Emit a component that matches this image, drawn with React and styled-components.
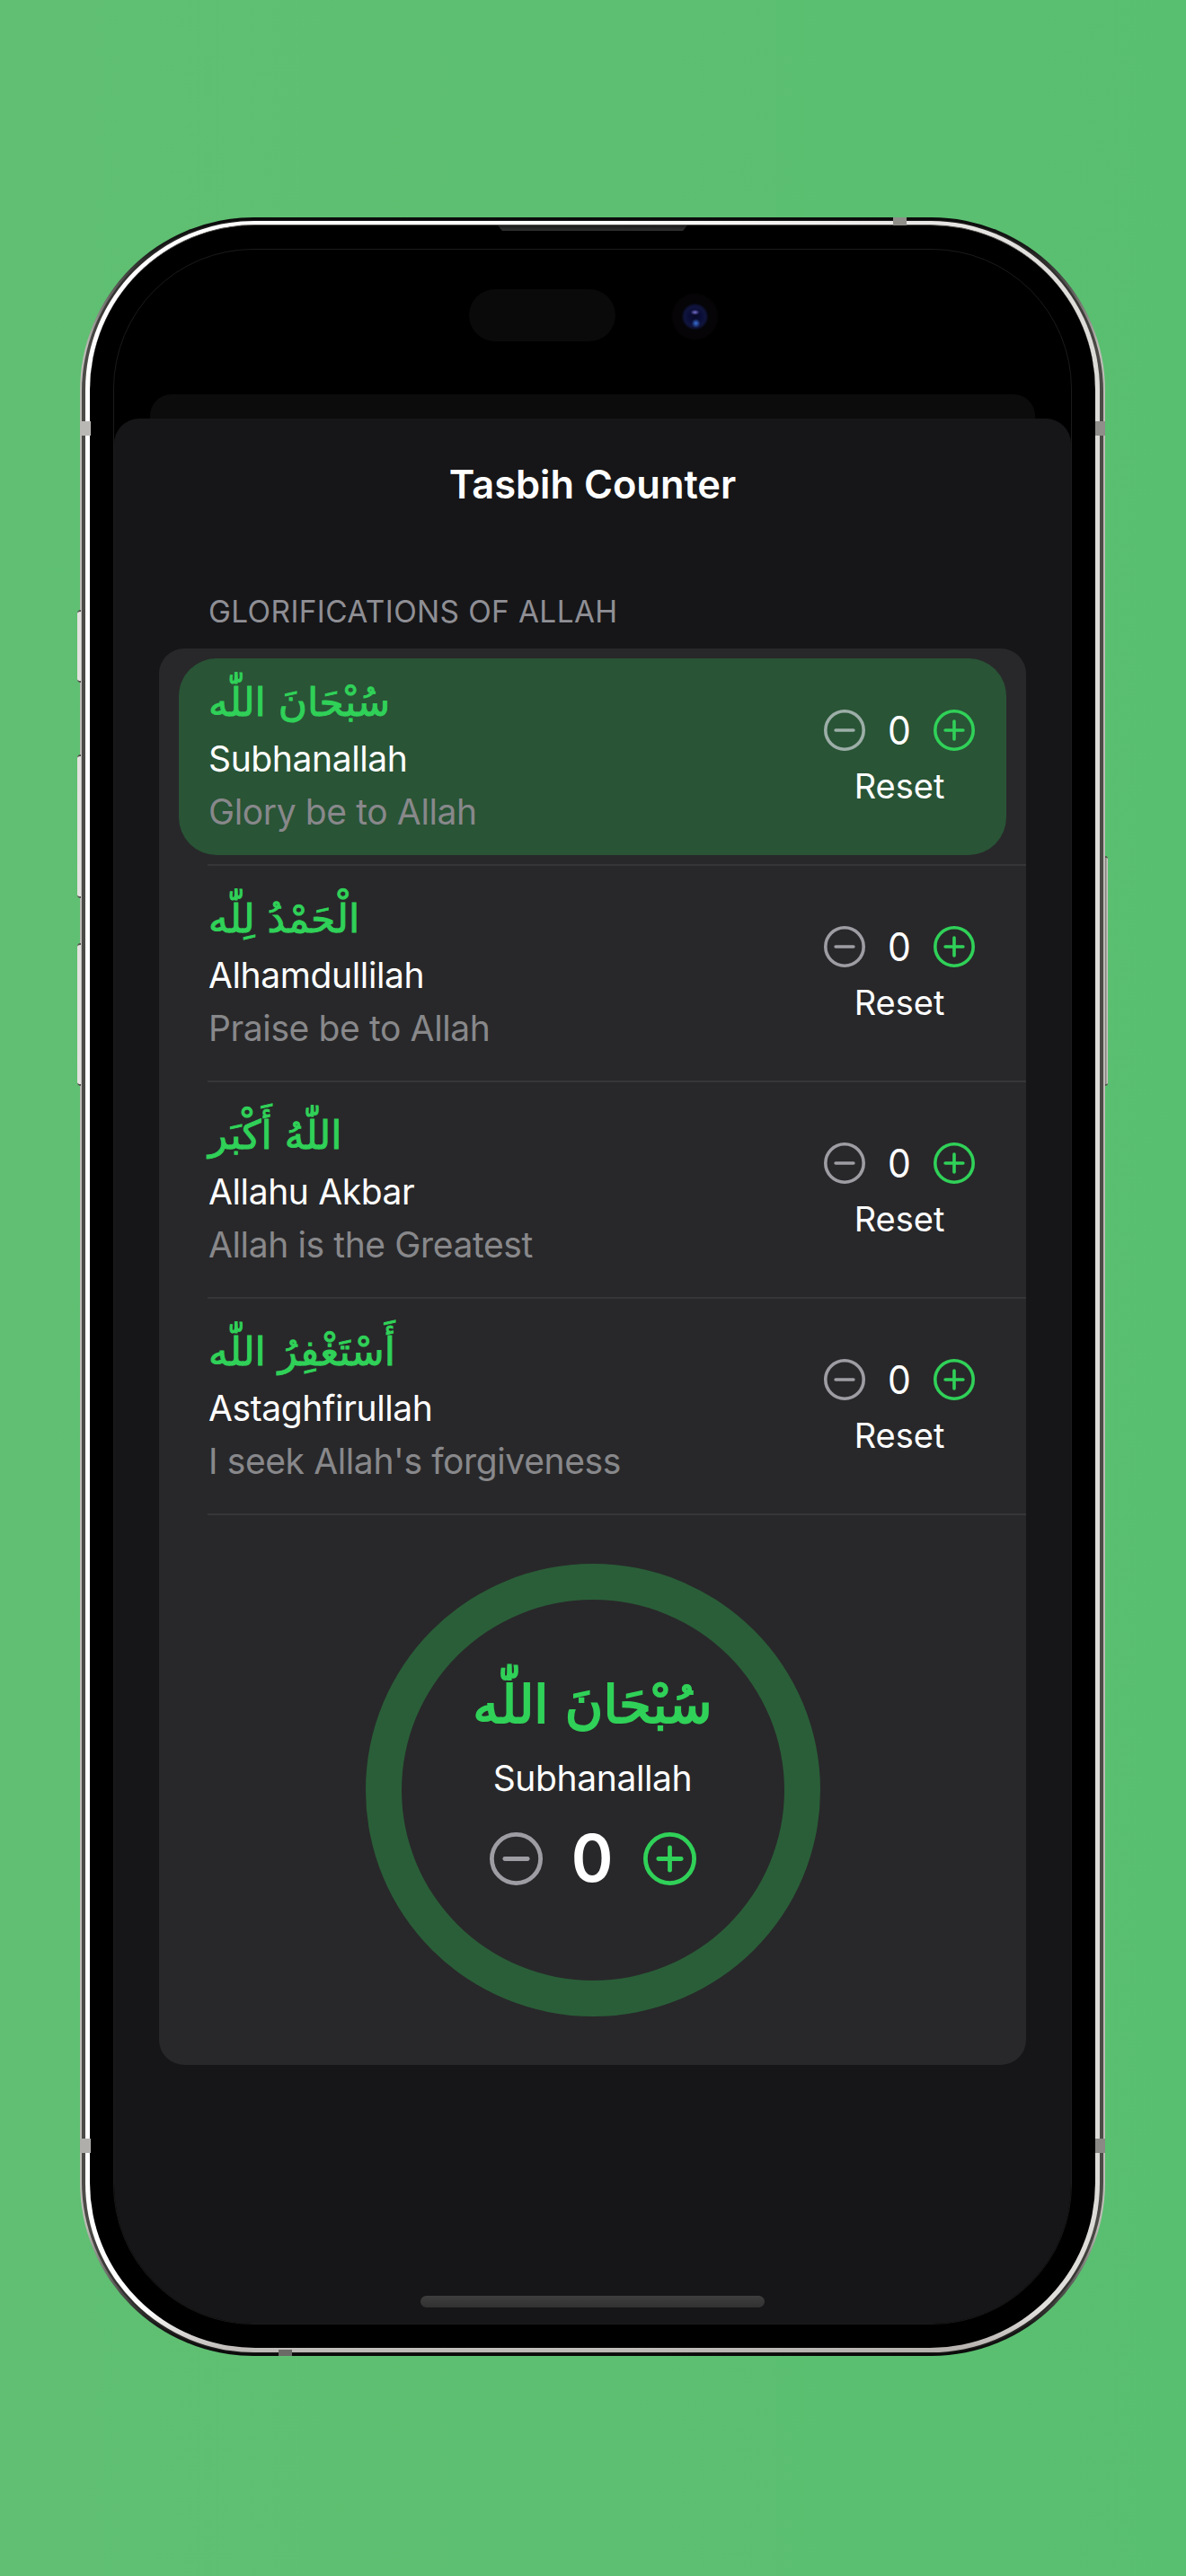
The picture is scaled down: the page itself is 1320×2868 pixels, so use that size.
import React from "react";
import styled, { createGlobalStyle, css } from "styled-components";

const GREEN = "#30d158";

const GlobalStyle = createGlobalStyle`
  *, *::before, *::after { box-sizing: border-box; }
  body { margin: 0; }
  button { margin: 0; padding: 0; border: 0; background: none; color: inherit; font: inherit; letter-spacing: inherit; }
`;

const Stage = styled.main`
  width: 1320px;
  height: 2868px;
  padding: 242px 90px 0 89px;
  background: linear-gradient(90deg, #60bf72, #59bf70);
  font-family: Inter, "Liberation Sans", sans-serif;
  color: #fff;
  overflow: hidden;
`;

const Phone = styled.div`
  position: relative;
  height: 2381px;
  padding: 3px 2px;
  border-radius: 193px;
  background: linear-gradient(#0a0a0a 0, #1a1a1a 1.5%, #bdbbb6 6%, #bdbbb6 94%, #1a1a1a 98.5%, #0a0a0a);
`;

const FrameGroove = styled.div`
  height: 100%;
  padding: 1px 4px;
  border-radius: 191px;
  background: linear-gradient(#1c1b1a, #4c4a47 6%, #4c4a47 94%, #1c1b1a);
`;

const FrameShine = styled.div`
  height: 100%;
  padding: 4px 5px 5px;
  border-radius: 188px;
  background:
    linear-gradient(transparent 98%, rgba(150, 144, 140, 0.65)),
    linear-gradient(90deg, #fff 0, #fff 50%, #dddbd8 100%);
`;

const Bezel = styled.div`
  height: 100%;
  padding: 26px;
  border-top: 1px solid #55534f;
  border-radius: 184px;
  background: #000;
`;

const Screen = styled.div`
  position: relative;
  display: flex;
  flex-direction: column;
  height: 100%;
  padding-top: 161px;
  border: 1px solid #1b1b1b;
  border-radius: 156px;
  background: #000;
  overflow: hidden;
`;

const BackSheet = styled.div`
  flex: none;
  height: 27px;
  margin: 0 40px;
  border-radius: 24px 24px 0 0;
  background: #0c0c0c;
`;

const Sheet = styled.section`
  flex: 1;
  display: flex;
  flex-direction: column;
  padding: 45px 50px 0;
  border-radius: 28px 28px 0 0;
  background: #161618;
`;

const Title = styled.h1`
  margin: 0;
  text-align: center;
  font-size: 43.4px;
  line-height: 56px;
  font-weight: 600;
`;

const SectionLabel = styled.h2`
  margin: 90px 0 0 55px;
  font-size: 33.4px;
  line-height: 48px;
  font-weight: 400;
  letter-spacing: 0.38px;
  color: #8f8f95;
`;

const Card = styled.div`
  height: 1577px;
  margin-top: 17px;
  border-radius: 28px;
  background: #28282a;
`;

const Row = styled.div`
  display: flex;
  align-items: stretch;
  height: 241px;
  padding: 11px 22px 0 22px;
`;

const RowBody = styled.div`
  flex: 1;
  display: flex;
  justify-content: space-between;
  height: 219px;
  padding: 0 35px 0 33px;
  border-radius: 42px;
  background: ${(p) => (p.$active ? "#295436" : "transparent")};
`;

const Divider = styled.hr`
  height: 2px;
  margin: -1px 0 -1px 54px;
  border: 0;
  background: #363638;
`;

const Phrase = styled.div`
  display: flex;
  flex-direction: column;
  align-items: flex-start;
  padding-top: 16px;
`;

const Arabic = styled.span`
  font-family: "DejaVu Sans", sans-serif;
  font-size: ${(p) => (p.$large ? 58 : 44)}px;
  line-height: ${(p) => (p.$large ? 86 : 66)}px;
  -webkit-text-stroke: ${(p) => (p.$large ? 2 : 1)}px ${GREEN};
  white-space: nowrap;
  color: ${GREEN};
`;

const Name = styled.span`
  font-size: 39px;
  line-height: 59px;
  letter-spacing: -0.38px;
  white-space: nowrap;
`;

const Meaning = styled(Name)`
  color: #88888b;
`;

const Controls = styled.div`
  display: flex;
  flex-direction: column;
  align-items: center;
  padding-top: 57px;
`;

const Stepper = styled.div`
  display: flex;
  align-items: center;
  justify-content: space-between;
  width: ${(p) => (p.$large ? 230 : 168)}px;
  height: ${(p) => (p.$large ? 60 : 46)}px;
`;

const Count = styled.span`
  font-size: ${(p) => (p.$large ? 73 : 44)}px;
  line-height: 46px;
  font-weight: ${(p) => (p.$large ? 600 : 400)};
  transform: scaleX(${(p) => (p.$large ? 0.97 : 0.93)});
`;

const IconButton = styled.button`
  display: flex;
  color: ${(p) => (p.$tone === "add" ? GREEN : "rgba(235, 235, 245, 0.6)")};
`;

const ResetButton = styled.button`
  margin-top: 14px;
  font-size: 38px;
  line-height: 50px;
`;

const RingArea = styled.div`
  display: flex;
  justify-content: center;
  padding-top: 55px;
`;

const Ring = styled.div`
  display: flex;
  flex-direction: column;
  align-items: center;
  width: 506px;
  height: 504px;
  padding-top: 74px;
  border: 40px solid #2a5e38;
  border-radius: 50%;
`;

const RingName = styled(Name)`
  margin: 9px 0 30px;
`;

const Overlay = styled.span`
  position: absolute;
  left: ${(p) => p.$x}px;
  top: ${(p) => p.$y}px;
  width: ${(p) => p.$w}px;
  height: ${(p) => p.$h}px;
`;

const Band = styled(Overlay)`
  background: ${(p) => p.$tint};
`;

const SideKey = styled(Overlay)`
  border: solid #55524e;
  border-width: 2px 0;
  background: #e4e2df;
  ${(p) =>
    p.$right
      ? css`border-radius: 0 4px 4px 0; background: linear-gradient(90deg, #77736e, #d8d6d2);`
      : css`border-radius: 4px 0 0 4px;`}
`;

const Earpiece = styled(Overlay)`
  background: linear-gradient(#1c1c1c, #303030);
  clip-path: polygon(0 0, 100% 0, calc(100% - 5px) 100%, 5px 100%);
`;

const SensorPill = styled(Overlay)`
  border-radius: 29px;
  background: #0a0a0a;
`;

const Camera = styled(Overlay)`
  border-radius: 50%;
  background:
    radial-gradient(ellipse 5px 3px at 50% 41%, #7a70d0 0, rgba(50, 44, 140, 0) 100%),
    radial-gradient(circle 5px at 52% 64%, #3a70d8 0, rgba(30, 60, 150, 0) 100%),
    radial-gradient(circle 26px at 50% 50%, #080a26 0, #0a0e38 28%, #10153e 44%, #0b0d26 52%, #050407 58%, #060406 92%, #020202 100%);
`;

const HomeIndicator = styled(Overlay)`
  border-radius: 7px;
  background: linear-gradient(#3e3e3f, #313132);
`;

function CircleIcon({ size, stroke, plus }) {
  const c = size / 2;
  const arm = size * 0.215;
  return (
    <svg width={size} height={size} fill="none" stroke="currentColor" strokeWidth={stroke} strokeLinecap="round">
      <circle cx={c} cy={c} r={c - stroke / 2} />
      <path d={`M${c - arm} ${c}H${c + arm}`} />
      {plus && <path d={`M${c} ${c - arm}V${c + arm}`} />}
    </svg>
  );
}

function Counter({ value, large }) {
  const icon = large ? { size: 59, stroke: 4.8 } : { size: 46, stroke: 3.6 };
  return (
    <Stepper $large={large}>
      <IconButton aria-label="Decrease" $tone="remove"><CircleIcon {...icon} /></IconButton>
      <Count $large={large}>{value}</Count>
      <IconButton aria-label="Increase" $tone="add"><CircleIcon {...icon} plus /></IconButton>
    </Stepper>
  );
}

const PHRASES = [
  { arabic: "سُبْحَانَ اللّٰه", name: "Subhanallah", meaning: "Glory be to Allah" },
  { arabic: "الْحَمْدُ لِلّٰه", name: "Alhamdullilah", meaning: "Praise be to Allah" },
  { arabic: "اللّٰهُ أَكْبَر", name: "Allahu Akbar", meaning: "Allah is the Greatest" },
  { arabic: "أَسْتَغْفِرُ اللّٰه", name: "Astaghfirullah", meaning: "I seek Allah's forgiveness" },
];

export default function App() {
  return (
    <Stage>
      <GlobalStyle />
      <Phone>
        <SideKey $x={-3} $y={437} $w={4} $h={81} />
        <SideKey $x={-3} $y={598} $w={4} $h={160} />
        <SideKey $x={-3} $y={808} $w={4} $h={159} />
        <SideKey $right $x={1141} $y={711} $w={3} $h={256} />
        <FrameGroove>
          <FrameShine>
            <Bezel>
              <Screen>
                <BackSheet />
                <Sheet>
                  <Title>Tasbih Counter</Title>
                  <SectionLabel>GLORIFICATIONS OF ALLAH</SectionLabel>
                  <Card>
                    {PHRASES.map((p, i) => (
                      <React.Fragment key={p.name}>
                        <Row>
                          <RowBody $active={i === 0}>
                            <Phrase>
                              <Arabic dir="rtl" lang="ar">{p.arabic}</Arabic>
                              <Name>{p.name}</Name>
                              <Meaning>{p.meaning}</Meaning>
                            </Phrase>
                            <Controls>
                              <Counter value={0} />
                              <ResetButton>Reset</ResetButton>
                            </Controls>
                          </RowBody>
                        </Row>
                        <Divider />
                      </React.Fragment>
                    ))}
                    <RingArea>
                      <Ring>
                        <Arabic $large dir="rtl" lang="ar">{PHRASES[0].arabic}</Arabic>
                        <RingName>{PHRASES[0].name}</RingName>
                        <Counter value={0} large />
                      </Ring>
                    </RingArea>
                  </Card>
                </Sheet>
              </Screen>
            </Bezel>
          </FrameShine>
        </FrameGroove>
        <Earpiece $x={465} $y={9} $w={211} $h={6} />
        <SensorPill $x={433} $y={80} $w={163} $h={58} />
        <Camera $x={658} $y={84} $w={53} $h={53} />
        <HomeIndicator $x={379} $y={2314} $w={383} $h={13} />
        <Band $x={0} $y={227} $w={12} $h={16} $tint="#bab8b5" />
        <Band $x={0} $y={2139} $w={12} $h={16} $tint="#b0aeab" />
        <Band $x={1130} $y={227} $w={11} $h={16} $tint="#8f8e8a" />
        <Band $x={1130} $y={2139} $w={11} $h={16} $tint="#8a8985" />
        <Band $x={905} $y={0} $w={15} $h={9} $tint="#8f8e89" />
        <Band $x={221} $y={2374} $w={15} $h={7} $tint="#6b6a66" />
      </Phone>
    </Stage>
  );
}
